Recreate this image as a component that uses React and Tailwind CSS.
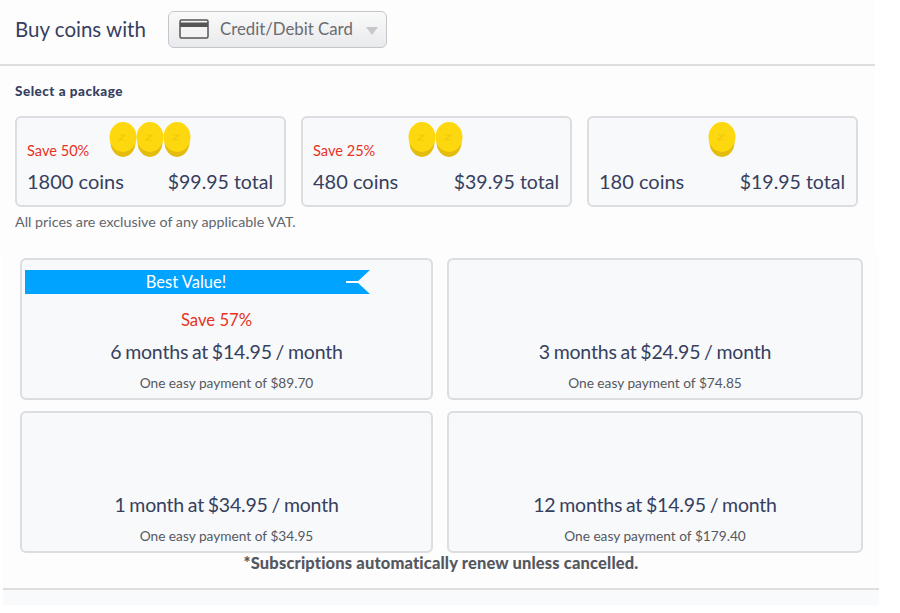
const font = { fontFamily: '"Lato", "Liberation Sans", sans-serif' };

const packages = [
  { save: 'Save 50%', coins: '1800 coins', total: '$99.95 total', stack: 3 },
  { save: 'Save 25%', coins: '480 coins', total: '$39.95 total', stack: 2 },
  { save: '', coins: '180 coins', total: '$19.95 total', stack: 1 },
];

const plans = [
  [
    { title: '6 months at $14.95 / month', pay: 'One easy payment of $89.70', best: true, w: 'w-[413px]' },
    { title: '3 months at $24.95 / month', pay: 'One easy payment of $74.85', w: 'w-[416px]' },
  ],
  [
    { title: '1 month at $34.95 / month', pay: 'One easy payment of $34.95', w: 'w-[413px]' },
    { title: '12 months at $14.95 / month', pay: 'One easy payment of $179.40', w: 'w-[416px]' },
  ],
];

function Coin() {
  return (
    <svg width="28" height="35" viewBox="0 0 28 35" className="-mr-[1px]">
      <ellipse cx="14" cy="20" rx="12.5" ry="15" fill="#e3bc0d" />
      <ellipse cx="14" cy="15" rx="13.5" ry="15" fill="#fdd80f" />
      <path d="M10 13h6l-6 5h6" fill="none" stroke="#f0c90c" strokeWidth="1.2" />
    </svg>
  );
}

function CardIcon() {
  return (
    <svg width="30" height="20" viewBox="0 0 30 20">
      <rect x="1" y="1" width="28" height="18" rx="1.5" fill="#f4f4f5" stroke="#555" strokeWidth="1.5" />
      <rect x="1" y="3.5" width="28" height="4.5" fill="#555" />
    </svg>
  );
}

export default function App() {
  return (
    <div className="w-[900px] h-[613px] bg-white text-[#36405f] overflow-hidden" style={font}>
      <div className="w-[875px] h-[255px] bg-[#fdfdfe]">
        <div className="h-[66px] flex items-center pl-[15px] border-b-2 border-[#dcdee0] pb-[6px]">
          <span className="text-[20.5px] w-[153px]">Buy coins with</span>
          <div className="w-[219px] h-[37px] flex items-center pl-[10px] rounded-[6px] border border-[#c3c6ca] bg-gradient-to-b from-[#fafafa] to-[#e9eaec]">
            <CardIcon />
            <span className="ml-[11px] text-[16.8px] text-[#6a6c70] -mt-[1px]">Credit/Debit Card</span>
            <span className="ml-[13px] mt-[3px] w-0 h-0 border-x-[6.5px] border-x-transparent border-t-[8px] border-t-[#c5c7ca]" />
          </div>
        </div>

        <p className="pl-[15px] pt-[17px] text-[13.5px] leading-[16px] font-black tracking-[0.5px]">Select a package</p>

        <div className="flex gap-[15px] pl-[15px] mt-[17px]">
          {packages.map((p) => (
            <div key={p.coins} className="relative w-[271px] h-[91px] rounded-[6px] border-2 border-[#dbdde0] bg-[#f8f9fa] pl-[10px] pr-[11px] flex flex-col justify-end pb-[10px]">
              <div className="absolute top-[4px] left-[87px] flex w-[90px] justify-center">
                {Array.from({ length: p.stack }).map((_, i) => <Coin key={i} />)}
              </div>
              {p.save && <span className="text-[14.6px] leading-[16px] text-[#e8321e] mb-[9px]">{p.save}</span>}
              <div className="flex justify-between items-baseline text-[20px] leading-[26px]">
                <span>{p.coins}</span>
                <span className="text-[19.5px]">{p.total}</span>
              </div>
            </div>
          ))}
        </div>

        <p className="pl-[15px] mt-[6px] text-[14.3px] leading-[18px] text-[#63666c]">All prices are exclusive of any applicable VAT.</p>
      </div>

      <div className="ml-[3px] w-[876px] h-[350px] bg-[#f9fafb]">
        <div className="h-[335px] bg-[#fdfdfe] border-b-2 border-[#dcdee0] pl-[17px] pt-[3px]">
          <div className="flex flex-col gap-[11px]">
            {plans.map((row, r) => (
              <div key={r} className="flex gap-[14px]">
                {row.map((plan) => (
                  <div key={plan.title} className={`relative ${plan.w} h-[142px] rounded-[6px] border-2 border-[#dbdde0] bg-[#f8f9fa] flex flex-col items-center justify-end pb-[6px]`}>
                    {plan.best && (
                      <div className="absolute top-[10px] left-[3px] w-[345px] h-[24px]">
                        <svg width="345" height="24" viewBox="0 0 345 24" className="absolute inset-0">
                          <path d="M0 0H345L332 12L345 24H0Z" fill="#00a3ff" />
                          <rect x="321" y="11" width="13" height="2" fill="#fff" />
                        </svg>
                        <span className="absolute inset-0 flex items-center justify-center text-[16.5px] text-white pr-[23px]">Best Value!</span>
                      </div>
                    )}
                    {plan.best && <span className="text-[16.7px] leading-[20px] text-[#e8321e] mb-[9px] pr-[20px]">Save 57%</span>}
                    <span className="text-[19.5px] leading-[26px] tracking-[-0.2px] [word-spacing:-1px]">{plan.title}</span>
                    <span className="text-[13.7px] leading-[18px] text-[#55585f] mt-[9px]">{plan.pay}</span>
                  </div>
                ))}
              </div>
            ))}
          </div>
          <p className="text-center text-[16.5px] leading-[18px] font-black tracking-[0.15px] text-[#55585f] -ml-[17px] mt-[1px]">*Subscriptions automatically renew unless cancelled.</p>
        </div>
      </div>
    </div>
  );
}
